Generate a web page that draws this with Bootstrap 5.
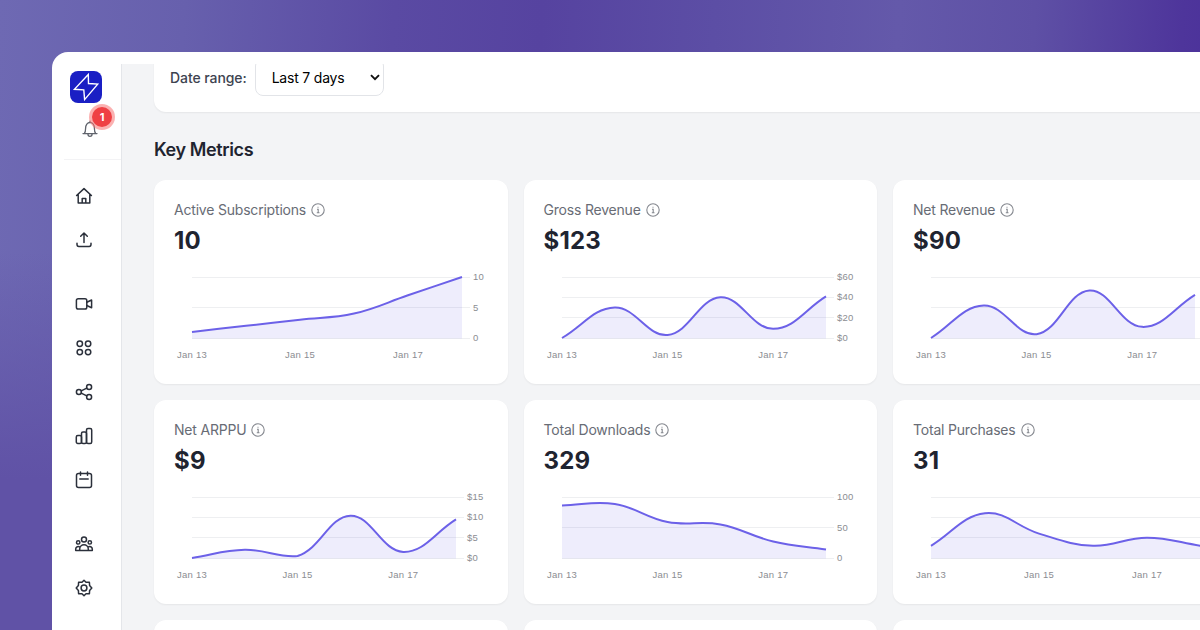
<!DOCTYPE html>
<html lang="en">
<head>
    <meta charset="UTF-8">
    <meta name="viewport" content="width=device-width, initial-scale=1">
    <title>Dashboard</title>
    <link href="https://cdn.jsdelivr.net/npm/bootstrap@5.3.0/dist/css/bootstrap.min.css" rel="stylesheet">
    <style>
        body {
            height: 630px;
            font-family: Inter, sans-serif;
            font-size: 14px;
            line-height: 20px;
            color: #1f2430;
            background:
                linear-gradient(180deg, rgba(96, 82, 166, 0) 40%, #6052a6 76%, #6052a6 100%) 0 0 / 52px 100% no-repeat,
                linear-gradient(93deg, #6e69b3 0, #6760ad 15%, #5a4aa3 32%, #5643a0 44%, #5c4ea5 58%, #6459aa 73%, #5e50a5 84%, #4e359b 96%, #4b319a 100%);
        }

        .app-window {
            height: 578px;
            margin: 52px 0 0 52px;
            padding-top: 12px;
            border-radius: 16px 0 0 0;
        }

        .sidebar {
            width: 70px;
            border-right: 1px solid #e4e6ea;
        }

        .sidebar-top {
            height: 96px;
            margin-left: 12px;
            padding: 7px 0 0 6px;
            border-bottom: 1px solid #f3f3f5;
        }

        .logo {
            width: 32px;
            height: 32px;
            border-radius: 8px;
            background: #1a1fc4;
        }

        .bell {
            width: 20px;
            height: 20px;
            margin: 16px 0 0 10px;
            color: #60646d;
        }

        .bell .line-icon {
            stroke-width: 1.3;
        }

        .bell-count {
            position: absolute;
            left: 12px;
            top: -12px;
            width: 20px;
            height: 20px;
            border-radius: 50%;
            background: #ef4044;
            box-shadow: 0 0 0 3px rgba(248, 113, 113, .55);
            color: #fff;
            font-size: 11px;
            font-weight: 700;
            line-height: 20px;
            text-align: center;
        }

        .side-nav {
            width: 64px;
            padding-top: 14px;
            color: #2b303b;
        }

        .side-nav a {
            height: 44px;
            color: inherit;
        }

        .side-nav a.group-start {
            margin-top: 20px;
        }

        .line-icon {
            width: 20px;
            height: 20px;
            fill: none;
            stroke: currentColor;
            stroke-width: 1.5;
            stroke-linecap: round;
            stroke-linejoin: round;
        }

        .page {
            background: #f3f4f6;
            padding-left: 32px;
        }

        .panel {
            background: #fff;
            border-radius: 12px;
            box-shadow: 0 1px 2px rgba(0, 0, 0, .06);
        }

        .filter-bar {
            width: 1092px;
            height: 70px;
            margin-top: -22px;
            padding: 16px;
        }

        .filter-bar label {
            padding-top: 1px;
            font-weight: 500;
            letter-spacing: -.08px;
            color: #3d4350;
        }

        .filter-bar .form-select {
            width: 129px;
            height: 38px;
            padding: 1px 28px 0 16px;
            border-color: #e2e4e8;
            border-radius: 8px;
            color: #000;
            font-size: 14px;
            letter-spacing: -.2px;
            background-image: url("data:image/svg+xml,%3Csvg xmlns='http://www.w3.org/2000/svg' viewBox='0 0 10 7'%3E%3Cpath d='M1 1.2l4 4 4-4' fill='none' stroke='%23111' stroke-width='1.9'/%3E%3C/svg%3E");
            background-size: 10px 7px;
            background-position: right 3px center;
        }

        .section-title {
            margin: 24px 0 16px;
            font-size: 18px;
            font-weight: 600;
            letter-spacing: -.38px;
            line-height: 28px;
        }

        .metric-grid {
            display: grid;
            grid-template-columns: repeat(3, 353.5px);
            grid-auto-rows: 204px;
            gap: 16px;
        }

        .metric {
            padding: 20px;
        }

        .metric-name {
            gap: 5px;
            letter-spacing: -.2px;
            color: #686c75;
        }

        .metric-name svg {
            width: 14px;
            height: 14px;
            color: #85888f;
        }

        .metric-value {
            margin-top: 5px;
            font-size: 24px;
            font-weight: 700;
            letter-spacing: .2px;
            line-height: 32px;
        }

        .chart {
            display: block;
            width: 314px;
            height: 100px;
            margin-top: 9px;
            overflow: visible;
        }

        .chart text {
            font-family: "Liberation Sans", Arial, sans-serif;
            font-size: 9.5px;
            letter-spacing: .25px;
            fill: #8b8d92;
        }

        .chart .grid-line {
            stroke: #eeeff1;
        }

        .chart .curve {
            fill: none;
            stroke: #6c61e8;
            stroke-width: 2;
        }

        .chart .area {
            fill: rgba(99, 91, 230, .11);
        }
    </style>
</head>
<body class="overflow-hidden">
<div class="app-window bg-white d-flex overflow-hidden">
    <!-- Sidebar -->
    <aside class="sidebar flex-shrink-0">
        <div class="sidebar-top">
            <div class="logo">
                <svg width="32" height="32" viewBox="0 0 32 32" fill="none" stroke="#fff" stroke-width="1.4" stroke-linejoin="miter">
                    <path d="M18.3 3.4 4.4 18.3l9.4.6.8 9.700L27.700 13.100l-9.200-.6z"/>
                </svg>
            </div>
            <div class="bell position-relative">
                <svg class="line-icon d-block" viewBox="0 0 20 20">
                    <path d="M3 14.6h14M4.400 14.400c.9-1.200 1.200-2.500 1.200-5.200C5.600 6 7.400 3.500 10 3.500s4.400 2.500 4.400 5.700c0 2.700.3 4 1.200 5.200M10 3.500V2.200M7.900 14.800a2.100 2.600 0 0 0 4.200 0"/>
                </svg>
                <span class="bell-count">1</span>
            </div>
        </div>
        <nav class="side-nav d-flex flex-column">
            <a href="#" class="d-flex align-items-center justify-content-center" aria-label="Home">
                <svg class="line-icon" viewBox="0 0 20 20"><path d="M2.600 9.500 10 2.600l7.400 6.900M4.200 8.400V17h11.600V8.400M8.200 17v-4.500h3.600V17"/></svg>
            </a>
            <a href="#" class="d-flex align-items-center justify-content-center" aria-label="Upload">
                <svg class="line-icon" viewBox="0 0 20 20"><path d="M10 12.600V3.200M6.700 6.300 10 3l3.300 3.300M3 13.200v1.400c0 1.100.8 1.800 1.800 1.800h10.400c1 0 1.800-.7 1.800-1.800v-1.400"/></svg>
            </a>
            <a href="#" class="group-start d-flex align-items-center justify-content-center" aria-label="Video">
                <svg class="line-icon" viewBox="0 0 20 20"><rect x="2.400" y="4.700" width="10.400" height="10.400" rx="1.800"/><path d="M12.800 8.300 17.600 6v7.800l-4.800-2.300"/></svg>
            </a>
            <a href="#" class="d-flex align-items-center justify-content-center" aria-label="Apps">
                <svg class="line-icon" viewBox="0 0 20 20"><circle cx="5.800" cy="5.800" r="2.700"/><circle cx="14.100" cy="5.800" r="2.700"/><circle cx="5.800" cy="14.100" r="2.700"/><circle cx="14.100" cy="14.100" r="2.700"/></svg>
            </a>
            <a href="#" class="d-flex align-items-center justify-content-center" aria-label="Share">
                <svg class="line-icon" viewBox="0 0 20 20"><circle cx="4.900" cy="10" r="2.500"/><circle cx="15.100" cy="5" r="2.500"/><circle cx="15.100" cy="15" r="2.500"/><path d="m7.200 8.900 5.600-2.800M7.200 11.100l5.600 2.800"/></svg>
            </a>
            <a href="#" class="d-flex align-items-center justify-content-center" aria-label="Analytics">
                <svg class="line-icon" viewBox="0 0 20 20"><rect x="2.300" y="9.500" width="5.200" height="8" rx="1.500"/><rect x="7.500" y="6" width="5" height="11.500" rx="1.500"/><rect x="12.500" y="2.500" width="5.200" height="15" rx="1.500"/></svg>
            </a>
            <a href="#" class="d-flex align-items-center justify-content-center" aria-label="Calendar">
                <svg class="line-icon" viewBox="0 0 20 20"><rect x="2.500" y="3.600" width="15" height="14" rx="2"/><path d="M6.500 2v3.200M13.500 2v3.200M5.800 9h8.400"/></svg>
            </a>
            <a href="#" class="group-start d-flex align-items-center justify-content-center" aria-label="Team">
                <svg class="line-icon" viewBox="0 0 20 20"><circle cx="10" cy="5.500" r="2.500"/><circle cx="4.200" cy="8.400" r="1.700"/><circle cx="15.800" cy="8.400" r="1.700"/><path d="M5.700 16.600v-1.500a4.300 4.300 0 0 1 8.600 0v1.500zM5.700 16.600h-4v-1.500a2.600 2.600 0 0 1 4.300-2M14.300 16.600h4v-1.500a2.600 2.600 0 0 0-4.300-2"/></svg>
            </a>
            <a href="#" class="d-flex align-items-center justify-content-center" aria-label="Settings">
                <svg class="line-icon" viewBox="0 0 20 20"><circle cx="10" cy="10" r="2.900"/><path d="M10 2.300 12 4.300l3.400-.1.200 3.300L17.800 10l-2.200 2.500-.2 3.300-3.400-.1-2 2-2-2-3.400.1-.2-3.300L2.200 10l2.200-2.500.2-3.300 3.400.1z"/></svg>
            </a>
        </nav>
    </aside>

    <!-- Content -->
    <main class="page flex-grow-1 overflow-hidden">
        <div class="panel filter-bar d-flex align-items-center gap-2">
            <label for="dateRange">Date range:</label>
            <select id="dateRange" class="form-select">
                <option>Last 7 days</option>
                <option>Last 30 days</option>
            </select>
        </div>
        <h2 class="section-title">Key Metrics</h2>
        <div class="metric-grid" id="metricGrid"></div>
    </main>
</div>

<script src="https://cdn.jsdelivr.net/npm/bootstrap@5.3.0/dist/js/bootstrap.bundle.min.js"></script>
<script>
    // width is the plot width; ticks run from top to bottom
    const metrics = [
        { name: "Active Subscriptions", value: "10", width: 270, max: 10, ticks: ["10", "5", "0"], data: [1, 2, 3, 4, 7, 10] },
        { name: "Gross Revenue", value: "$123", width: 264, max: 60, ticks: ["$60", "$40", "$20", "$0"], data: [0, 30, 3, 40, 9, 41] },
        { name: "Net Revenue", value: "$90", width: 264, max: 40, ticks: ["", "", ""], data: [0, 21.3, 2.5, 31.2, 7.3, 28.3] },
        { name: "Net ARPPU", value: "$9", width: 264, max: 15, ticks: ["$15", "$10", "$5", "$0"], data: [0, 2, 0.5, 10.4, 1.5, 9.5] },
        { name: "Total Downloads", value: "329", width: 264, max: 100, ticks: ["100", "50", "0"], data: [86, 88.5, 59, 55, 27, 14] },
        { name: "Total Purchases", value: "31", width: 270, max: 15, ticks: ["", "", "", ""], data: [3, 11, 6, 3, 5, 3] }
    ];

    const left = 18, top0 = 11, plotHeight = 61;

    // Bezier spline with control points kept inside the plot
    function splinePath(points) {
        const tension = 0.4;
        const clamp = y => Math.min(top0 + plotHeight, Math.max(top0, y));
        const controls = points.map((p, i) => {
            const prev = points[i - 1] || p;
            const next = points[i + 1] || p;
            const a = Math.hypot(p.x - prev.x, p.y - prev.y);
            const b = Math.hypot(next.x - p.x, next.y - p.y);
            const fa = tension * a / (a + b);
            const fb = tension * b / (a + b);
            const dx = next.x - prev.x;
            const dy = next.y - prev.y;
            return {
                before: `${p.x - fa * dx} ${clamp(p.y - fa * dy)}`,
                after: `${p.x + fb * dx} ${clamp(p.y + fb * dy)}`
            };
        });
        return points.slice(1).reduce((path, p, i) =>
            path + `C${controls[i].after} ${controls[i + 1].before} ${p.x} ${p.y}`,
            `M${points[0].x} ${points[0].y}`);
    }

    function chart(m) {
        const bottom = top0 + plotHeight;
        const step = m.width / (m.data.length - 1);
        const points = m.data.map((v, i) => ({ x: left + i * step, y: bottom - v / m.max * plotHeight }));
        const path = splinePath(points);
        const grid = m.ticks.map((tick, i) => {
            const y = top0 + i * plotHeight / (m.ticks.length - 1);
            const lineY = Math.floor(y) + 0.5;
            const label = tick ? `<text x="${left + m.width + 11}" y="${y + 3}">${tick}</text>` : "";
            return `<line class="grid-line" x1="${left}" x2="${left + m.width + 8}" y1="${lineY}" y2="${lineY}"/>${label}`;
        }).join("");
        const dates = ["Jan 13", "Jan 15", "Jan 17"].map((d, i) =>
            `<text x="${left + i * 2 * step}" y="92" text-anchor="middle">${d}</text>`).join("");
        return `<svg class="chart" viewBox="0 0 314 100">${grid}
            <path class="area" d="${path}V${bottom + 0.5}H${left}z"/>
            <path class="curve" d="${path}"/>${dates}</svg>`;
    }

    const infoIcon = `<svg viewBox="0 0 14 14" fill="none" stroke="currentColor" stroke-width="1.1">
        <circle cx="7" cy="7" r="6.2"/><path d="M6 6.3h1.200v3.300M5.800 9.700h2.700M6.500 4.300h1"/></svg>`;

    const grid = document.getElementById("metricGrid");
    metrics.forEach(m => {
        grid.innerHTML += `
            <div class="panel metric">
                <div class="metric-name d-flex align-items-center">
                    <span>${m.name}</span>${infoIcon}
                </div>
                <div class="metric-value">${m.value}</div>
                ${chart(m)}
            </div>`;
    });
    grid.innerHTML += `<div class="panel"></div><div class="panel"></div><div class="panel"></div>`;
</script>
</body>
</html>
